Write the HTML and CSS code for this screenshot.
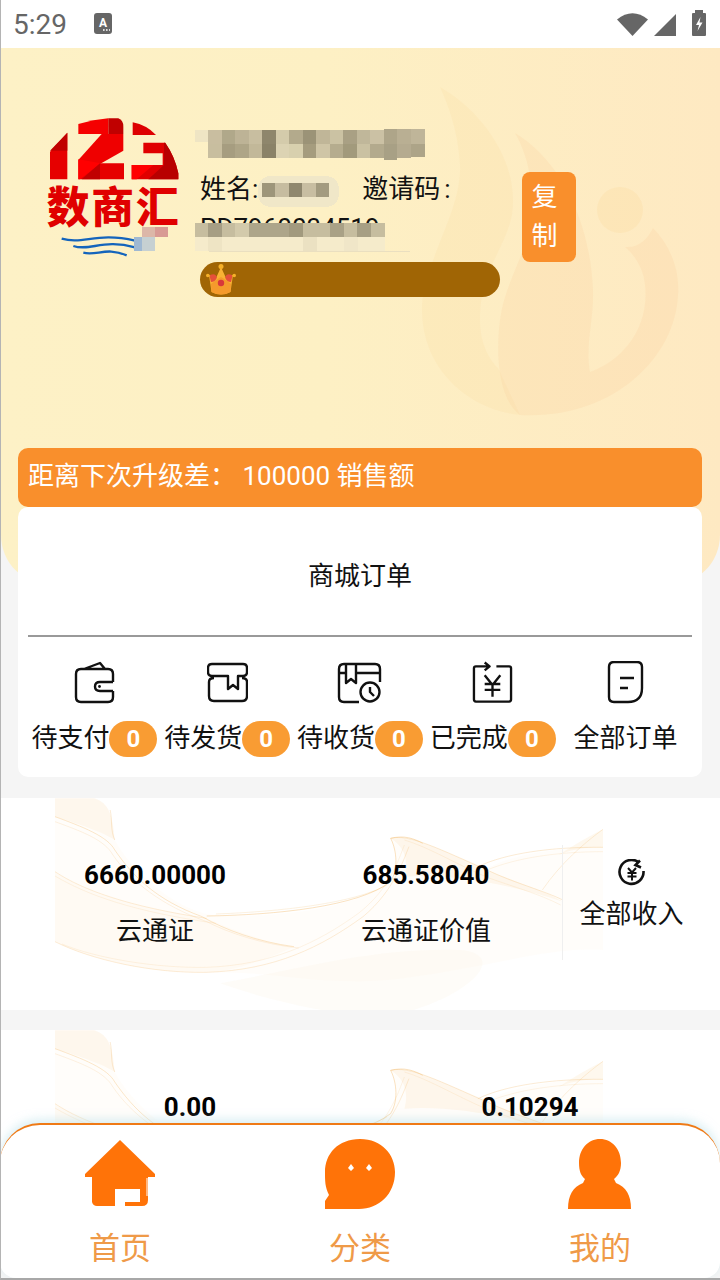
FILE: index.html
```html
<!DOCTYPE html>
<html lang="zh">
<head>
<meta charset="utf-8">
<title>数商汇</title>
<link rel="stylesheet" href="styles.css">
</head>
<body>
<svg class="defs" width="0" height="0">
  <symbol id="wave" viewBox="120 24 1192 636" preserveAspectRatio="none">
    <path fill="#fbe3bd" opacity=".08" d="M120 25H205C240 40 245 80 250 150C280 230 380 370 480 378C640 380 780 350 850 270C870 230 860 170 850 145C890 130 960 180 1060 235C1120 190 1220 172 1312 170V480C1200 470 1100 520 900 560C720 600 600 540 450 547C330 550 200 510 120 455Z"/>
    <path fill="#fbdcae" opacity=".2" d="M850 145C890 130 960 180 1060 240C1120 275 1180 300 1225 335C1100 280 980 250 880 260C890 210 880 170 850 145Z"/>
    <path fill="#fbe3bd" opacity=".1" d="M120 245C180 300 280 350 450 385C520 430 590 460 640 470C560 520 500 545 450 547C330 550 200 510 120 455Z"/>
    <path fill="#fbdcae" opacity=".16" d="M120 25H205C240 40 245 80 250 150C230 130 170 100 120 80Z"/>
    <path fill="#fdf3e2" opacity=".25" d="M480 580C640 540 820 470 1000 480C1100 490 1040 600 900 660H700C620 640 540 610 480 580Z"/>
    <path fill="#fbe3bd" opacity=".25" d="M1312 118V172C1270 172 1240 180 1215 195C1250 165 1280 140 1312 118Z"/>
    <g fill="none" stroke="#f2b868" stroke-width="1.3">
      <path opacity=".65" d="M120 80C180 110 235 140 250 180C290 260 340 330 440 380C490 420 560 455 640 470"/>
      <path opacity=".35" d="M120 95C180 125 228 150 246 195C286 275 350 345 450 395C500 430 570 462 650 474"/>
      <path opacity=".5" d="M120 245C180 300 280 350 450 385"/>
      <path opacity=".3" d="M120 258C190 315 290 365 470 400"/>
      <path opacity=".5" d="M120 455C200 510 330 550 450 547C600 540 700 470 790 380C860 300 880 200 890 170"/>
      <path opacity=".3" d="M135 462C210 505 340 535 450 532C590 525 690 460 780 370C850 295 868 205 880 165"/>
      <path opacity=".8" d="M450 378C600 375 780 350 850 275C870 230 860 170 850 145C880 135 900 145 920 160"/>
      <path opacity=".4" d="M470 372C610 365 770 340 842 285"/>
      <path opacity=".55" d="M850 145C890 130 960 180 1060 240C1120 280 1180 300 1225 330"/>
      <path opacity=".3" d="M880 150C930 170 990 220 1060 262C1120 292 1170 310 1220 345"/>
      <path opacity=".55" d="M1040 230C1100 190 1200 170 1312 172"/>
      <path opacity=".3" d="M1060 240C1120 205 1210 185 1312 185"/>
      <path opacity=".45" d="M1312 118C1270 160 1220 220 1180 300"/>
      <path opacity=".55" d="M240 60C245 90 240 120 250 150"/>
    </g>
  </symbol>
</svg>

<div class="phone">
  <header class="status">
    <span class="time">5:29</span>
    <svg class="icon-a" viewBox="0 0 18 21"><rect width="18" height="21" rx="3" fill="#666"/><text x="9" y="13.5" class="icon-a-text">A</text><path d="M9 17h1.6M12 17h1.6M15 17h1" stroke="#fff" stroke-width="1.4"/></svg>
    <span class="spacer"></span>
    <svg class="icon-wifi" viewBox="0 0 31 24"><path fill="#666" d="M0 7.5Q15.5-5 31 7.5L15.5 24Z"/></svg>
    <svg class="icon-signal" viewBox="0 0 22 22"><path fill="#666" d="M0 22L22 0V22Z"/></svg>
    <svg class="icon-battery" viewBox="0 0 14 26"><path fill="#666" d="M3 0H11V3H13Q14 3 14 4V25Q14 26 13 26H1Q0 26 0 25V4Q0 3 1 3H3Z"/><path fill="#fff" d="M8.5 7L4 15H7L5.5 21L10.5 12.5H7.5Z"/></svg>
  </header>

  <main class="main">
    <div class="hero-bg">
      <svg class="flame" viewBox="400 48 320 537">
        <path fill="#fbd99a" opacity=".18" d="M440 87C480 110 520 160 512 215C505 250 480 270 480 320C480 345 490 360 498 368L520 415C470 410 420 370 422 305C425 260 462 210 460 165C458 130 448 105 440 87Z"/>
        <path fill="#fbcf9a" opacity=".22" d="M515 133C560 160 590 220 593 290C594 320 585 345 590 372C620 362 650 330 645 285C644 270 635 255 625 247C640 248 648 238 653 228C670 245 680 270 678 295C675 360 610 420 520 415C500 400 495 360 500 320C505 280 530 250 532 210C533 175 525 150 515 133Z"/>
        <circle cx="620" cy="210" r="23" fill="#fbd490" opacity=".22"/>
      </svg>
    </div>

    <section class="profile">
      <svg class="logo" viewBox="0 0 450 465">
        <path fill="#e60000" d="M30 125L82 68V208H30Z"/>
        <path fill="#c00000" d="M30 122L82 68V122Z"/>
        <path fill="#f50000" d="M115 42Q160 28 205 25V72H115Z"/>
        <path fill="#c00000" d="M205 25H235Q250 30 250 50V72H205Z"/>
        <path fill="#ef0000" d="M185 72H250V122L180 162L115 150Z"/>
        <path fill="#e60000" d="M115 150L180 160H252V208H115Z"/>
        <path fill="#ff0000" d="M115 148L182 160L120 208H115Z"/>
        <path fill="#c00000" d="M125 208L180 160V208Z"/>
        <path fill="#dd0000" d="M278 37Q320 45 348 75H278Z"/>
        <path fill="#e00000" d="M310 98H375Q405 140 415 190V208H275V165H368V130H310Z"/>
        <path fill="#ff0000" d="M275 165H340L290 208H275Z"/>
        <path fill="#b80000" d="M325 208L372 165V98H376Q405 140 415 190V208Z"/>
        <text class="logo-text" x="20" y="338" textLength="396">数商汇</text>
        <g fill="none" stroke="#1464bc" stroke-width="7">
          <path d="M65 386C130 405 170 365 285 392"/>
          <path d="M100 408C150 425 190 385 285 412"/>
          <path d="M130 428C170 438 200 410 260 436"/>
        </g>
        <g shape-rendering="crispEdges">
          <rect x="305" y="350" width="40" height="30" fill="#dcb7a8"/>
          <rect x="345" y="350" width="40" height="30" fill="#d89a94"/>
          <rect x="283" y="380" width="22" height="42" fill="#9fb8d2"/>
          <rect x="305" y="380" width="40" height="42" fill="#c6d0d2"/>
        </g>
      </svg>

      <div class="info">
        <svg class="mosaic-title" viewBox="0 0 230 31" shape-rendering="crispEdges">
          <rect x="0" y="1" width="14" height="12" fill="#efe5c4"/>
          <rect x="13" y="1" width="14" height="14" fill="#c9bea0"/><rect x="27" y="1" width="13" height="14" fill="#b0a88a"/><rect x="40" y="1" width="14" height="14" fill="#bdb396"/><rect x="54" y="1" width="13" height="14" fill="#c8bea0"/><rect x="67" y="1" width="14" height="14" fill="#8e866c"/><rect x="81" y="1" width="13" height="14" fill="#d4cbab"/><rect x="94" y="1" width="14" height="14" fill="#b3aa8c"/><rect x="108" y="1" width="13" height="14" fill="#9b9377"/><rect x="121" y="1" width="14" height="14" fill="#c0b698"/><rect x="135" y="1" width="13" height="14" fill="#cbc2a3"/><rect x="148" y="1" width="14" height="14" fill="#a9a084"/><rect x="162" y="1" width="13" height="14" fill="#c0b79a"/><rect x="175" y="1" width="14" height="14" fill="#cbc1a4"/><rect x="189" y="0" width="13" height="15" fill="#aea589"/><rect x="202" y="0" width="14" height="15" fill="#b9af93"/><rect x="216" y="0" width="14" height="15" fill="#bfb599"/>
          <rect x="13" y="15" width="14" height="14" fill="#c8be9f"/><rect x="27" y="15" width="13" height="14" fill="#a69d80"/><rect x="40" y="15" width="14" height="14" fill="#aea587"/><rect x="54" y="15" width="13" height="14" fill="#c2b899"/><rect x="67" y="15" width="14" height="14" fill="#8a8268"/><rect x="81" y="15" width="13" height="14" fill="#dcd3b3"/><rect x="94" y="15" width="14" height="14" fill="#d8d0ae"/><rect x="108" y="15" width="13" height="14" fill="#a59c7e"/><rect x="121" y="15" width="14" height="14" fill="#cfc5a6"/><rect x="135" y="15" width="13" height="14" fill="#b5ac8e"/><rect x="148" y="15" width="14" height="14" fill="#a29a7c"/><rect x="162" y="15" width="13" height="14" fill="#cac1a2"/><rect x="175" y="15" width="14" height="14" fill="#b3aa8d"/><rect x="189" y="15" width="13" height="16" fill="#a8a085"/><rect x="202" y="15" width="14" height="14" fill="#b5ab90"/><rect x="216" y="15" width="14" height="13" fill="#ada488"/>
        </svg>
        <p class="details">姓名:<svg class="mosaic-name" viewBox="0 0 84 35" shape-rendering="crispEdges"><rect x="1" y="2" width="81" height="31" rx="13" fill="#f0e7c8"/><rect x="5" y="9" width="13" height="14" fill="#9d957a"/><rect x="18" y="9" width="14" height="14" fill="#c6bca0"/><rect x="32" y="9" width="13" height="14" fill="#8f876e"/><rect x="45" y="9" width="14" height="14" fill="#c8bea2"/><rect x="59" y="9" width="13" height="14" fill="#a39b80"/></svg><span class="invite">邀请码<span class="colon">:</span></span><br>PD7960034519
          <svg class="mosaic-code" viewBox="0 0 215 30" shape-rendering="crispEdges">
            <rect x="0" y="0" width="190" height="14" fill="#c6bd9f"/>
            <rect x="13" y="0" width="14" height="14" fill="#a69e84"/><rect x="40" y="0" width="14" height="14" fill="#d3caab"/><rect x="54" y="0" width="40" height="14" fill="#ada58a"/><rect x="94" y="0" width="14" height="14" fill="#a29a7e"/><rect x="135" y="0" width="14" height="14" fill="#a9a186"/><rect x="162" y="0" width="14" height="14" fill="#a79f84"/>
            <rect x="0" y="14" width="190" height="14" fill="#f5ebcb"/>
            <rect x="13" y="14" width="14" height="14" fill="#eee4c4"/><rect x="108" y="14" width="14" height="14" fill="#ebe1c2"/><rect x="149" y="14" width="14" height="14" fill="#f0e6c8"/>
            <rect x="14" y="28" width="201" height="1" fill="#eadfc0"/>
          </svg>
        </p>
        <div class="level">
          <svg class="crown" viewBox="0 0 30 32">
            <path fill="#f9b233" d="M15 3L19.5 13L27 11L24.5 28Q15 33 5.500 28L3 11L10.500 13Z"/>
            <path fill="#f59a2c" d="M5 20L10 16L15 13L20 16L25 20L24.500 28Q15 33 5.500 28Z"/>
            <path fill="#e5503a" d="M3.500 11.500Q9 8 11 13.500Q9 18 5 18Z"/>
            <path fill="#e5503a" d="M26.500 11.500Q21 8 19 13.500Q21 18 25 18Z"/>
            <circle cx="15" cy="2.500" r="2.500" fill="#f6b129"/><circle cx="1.800" cy="11.500" r="1.800" fill="#f6b129"/><circle cx="28.200" cy="11.500" r="1.800" fill="#f6b129"/>
            <circle cx="15" cy="19" r="3.200" fill="#d8383a"/>
          </svg>
        </div>
      </div>
      <button class="copy">复<br>制</button>
    </section>

    <div class="upgrade">距离下次升级差： 100000 销售额</div>

    <section class="orders">
      <h2 class="orders-title">商城订单</h2>
      <div class="orders-grid">
        <div class="order">
          <svg class="order-icon" viewBox="74 661 41 44"><path d="M113 682V674Q113 669 108 669H81Q76 669 76 674V697Q76 702 81 702H108Q113 702 113 697V691M84 669L100 663L105 669M113 682H100Q95 682 95 686.500Q95 691 100 691H113"/><circle class="dot" cx="99.500" cy="686.500" r="1.400"/></svg>
          <div class="order-label"><span>待支付</span><b class="badge">0</b></div>
        </div>
        <div class="order">
          <svg class="order-icon" viewBox="207 661 41 44"><path d="M220 676H212Q208 676 208 672V668Q208 664 212 664H243Q247 664 247 668V672Q247 676 243 676H238V689L233 685L228 689V676H220"/><path d="M214 678Q209 678 209 682V696Q209 701 214 701H242Q247 701 247 696V682Q247 678 242 678"/></svg>
          <div class="order-label"><span>待发货</span><b class="badge">0</b></div>
        </div>
        <div class="order">
          <svg class="order-icon wide" viewBox="338 661 46 44"><path d="M360 702H345Q340 702 340 697V669Q340 664 345 664H376Q381 664 381 669V682M340 673H347M357 673H381M347 664V683L352 679L357 683V664"/><circle cx="371" cy="692" r="9.500"/><path d="M371 687V692L375 696"/></svg>
          <div class="order-label"><span>待收货</span><b class="badge">0</b></div>
        </div>
        <div class="order">
          <svg class="order-icon" viewBox="472 661 42 44"><path d="M490 666H476Q474 666 474 668V700Q474 702 476 702H510Q512 702 512 700V668Q512 666 510 666H497M485 662L490 666L485 670M485 675L493 685L501 675M485 684H501M485 690H501M493 684V697"/></svg>
          <div class="order-label"><span>已完成</span><b class="badge">0</b></div>
        </div>
        <div class="order">
          <svg class="order-icon" viewBox="606 661 39 44"><path d="M614 662H637Q642 662 642 667V688Q642 702 628 702H614Q609 702 609 697V667Q609 662 614 662ZM620 678H634M620 688H628"/></svg>
          <div class="order-label"><span>全部订单</span></div>
        </div>
      </div>
    </section>

    <section class="income">
      <svg class="wave"><use href="#wave"/></svg>
      <div class="stat"><strong>6660.00000</strong><span>云通证</span></div>
      <div class="stat"><strong>685.58040</strong><span>云通证价值</span></div>
      <div class="all-income">
        <svg class="income-icon" viewBox="0 0 28 28"><path d="M21 3.500A12 12 0 1 0 25.500 12M22 1.500L17.500 6L23 8.500"/><path d="M10 9L14 13.500L18 9M9.500 14H18.500M9.500 17.500H18.500M14 13.500V21.500" class="thin"/></svg>
        <span>全部收入</span>
      </div>
    </section>

    <section class="income second">
      <svg class="wave"><use href="#wave"/></svg>
      <div class="stat"><strong>0.00</strong></div>
      <div class="stat"><strong>0.10294</strong></div>
    </section>

    <nav class="tabbar">
      <a class="tab">
        <svg class="tab-icon" viewBox="0 0 72 68"><path d="M36 0L71 34V37H64V60Q64 66 58 66H41V62H56V49H31V66H13Q9 66 8 62V37H1V34Z"/><path class="tab-cut" d="M63 38V56"/></svg>
        <span>首页</span>
      </a>
      <a class="tab">
        <svg class="tab-icon" viewBox="0 0 72 70"><path d="M36 0C58 0 71 16 71 33C71 55 55 70 35 70H1V62L5 56C1 48 1 42 1 33C1 15 14 0 36 0Z"/><path class="tab-eye" d="M27 25L30 29L27 32L24 29ZM45 25L48 29L45 32L42 29Z"/></svg>
        <span>分类</span>
      </a>
      <a class="tab">
        <svg class="tab-icon" viewBox="0 0 72 70"><path d="M36 0C48 0 57 10 57 24C57 32 54 37 50 40L52 44C62 48 67 56 67 70H4C4 56 9 48 19 44L21 40C17 37 15 32 15 24C15 10 24 0 36 0Z"/></svg>
        <span>我的</span>
      </a>
    </nav>
  </main>
</div>
</body>
</html>
```

FILE: styles.css
```css
* { box-sizing: border-box; }
html, body { margin: 0; padding: 0; }
body {
  width: 720px;
  height: 1280px;
  overflow: hidden;
  background: #f5f5f5;
  font-family: Roboto, "Noto Sans CJK SC", sans-serif;
  font-size: 26px;
  color: #111;
}
.defs { position: absolute; }
.phone {
  width: 720px;
  height: 1280px;
  border-left: 1px solid #b4b4b4;
  border-bottom: 2px solid #a8a8a8;
  position: relative;
  overflow: hidden;
}

/* status bar */
.status {
  height: 48px;
  background: #fff;
  display: flex;
  align-items: center;
  padding: 0 14px 0 12px;
}
.time { color: #666; font-size: 28px; width: 81px; }
.icon-a { width: 18px; height: 21px; margin-top: -1px; }
.icon-a-text { font: 700 12px Roboto, sans-serif; fill: #fff; text-anchor: middle; }
.spacer { flex: 1; }
.icon-wifi { width: 31px; height: 24px; }
.icon-signal { width: 22px; height: 22px; margin-left: 6px; margin-top: 1px; }
.icon-battery { width: 14px; height: 26px; margin-left: 16px; margin-top: -2px; }

/* hero */
.main { position: relative; }
.hero-bg {
  position: absolute;
  left: 0;
  top: 0;
  width: 719px;
  height: 537px;
  border-radius: 0 0 50px 50px;
  background: linear-gradient(90deg, #fdf1c6 0%, #fdf0c4 45%, #fee9c2 100%);
  overflow: hidden;
}
.flame { position: absolute; left: 399px; top: 0; width: 320px; height: 537px; }
.profile {
  position: relative;
  display: flex;
  align-items: flex-start;
  padding: 62px 0 0 39px;
}
.logo { width: 150px; height: 155px; flex: none; }
.logo-text {
  font: 900 128px "Noto Sans CJK SC", sans-serif;
  fill: #e00000;
}
.info { width: 300px; margin-left: 10px; }
.mosaic-title { display: block; width: 230px; height: 31px; margin: 19px 0 0 -5px; }
.details {
  position: relative;
  margin: 10px 0 0;
  height: 78px;
  line-height: 39px;
  white-space: nowrap;
}
.mosaic-name { width: 84px; height: 35px; vertical-align: middle; margin-left: -1px; }
.invite { margin-left: 21px; }
.colon { margin-left: 4px; }
.mosaic-code { position: absolute; left: -5px; top: 53px; width: 215px; height: 30px; }
.level {
  position: relative;
  height: 35px;
  margin-top: 14px;
  border-radius: 18px;
  background: #a06505;
}
.crown { position: absolute; left: 6px; top: 2px; width: 30px; height: 32px; }
.copy {
  width: 54px;
  height: 90px;
  margin: 62px 0 0 22px;
  padding: 0 9px 0 0;
  border: 0;
  border-radius: 8px;
  background: #f98f2c;
  color: #fff;
  font: 26px/39px Roboto, "Noto Sans CJK SC", sans-serif;
}

/* upgrade bar */
.upgrade {
  position: relative;
  height: 59px;
  margin: 151px 18px 0 17px;
  padding-left: 10px;
  line-height: 56px;
  border-radius: 10px;
  background: #f98f2c;
  color: #fff;
}

/* orders */
.orders {
  position: relative;
  height: 270px;
  margin: 0 18px 0 17px;
  padding: 0 10px;
  background: #fff;
  border-radius: 10px;
}
.orders-title {
  margin: 0;
  height: 130px;
  border-bottom: 2px solid #999;
  font-size: 26px;
  font-weight: 400;
  text-align: center;
  line-height: 138px;
}
.orders-grid { display: grid; grid-template-columns: repeat(5, 1fr); padding-top: 24px; }
.order { display: flex; flex-direction: column; align-items: center; }
.order-icon {
  width: 41px;
  height: 44px;
  fill: none;
  stroke: #111;
  stroke-width: 2.4;
  stroke-linejoin: round;
}
.order-icon.wide { width: 46px; }
.order-icon .dot { fill: #111; stroke: none; }
.order-label { display: flex; align-items: center; height: 36px; margin-top: 16px; white-space: nowrap; }
.order-label span { margin-top: -7px; }
.badge {
  width: 48px;
  height: 36px;
  border-radius: 18px;
  background: #f99c33;
  color: #fff;
  font-size: 24px;
  font-weight: 700;
  line-height: 36px;
  text-align: center;
}

/* income */
.income {
  position: relative;
  height: 212px;
  margin-top: 21px;
  padding: 0 18px 0 19px;
  background: #fff;
  display: grid;
  grid-template-columns: 270px 272px 1fr;
}
.income.second { margin-top: 20px; grid-template-columns: 1fr 1fr; padding-right: 20px; }
.wave { position: absolute; left: 54px; top: 0; width: 548px; height: 212px; }
.stat {
  position: relative;
  display: flex;
  flex-direction: column;
  align-items: center;
  padding-top: 60px;
}
.stat strong { font-size: 26px; line-height: 34px; font-weight: 700; color: #000; }
.stat span { margin-top: 22px; line-height: 34px; }
.all-income {
  position: relative;
  height: 115px;
  margin-top: 47px;
  padding-right: 2px;
  border-left: 1px solid #efefef;
  display: flex;
  flex-direction: column;
  align-items: center;
}
.income-icon {
  width: 28px;
  height: 28px;
  margin-top: 14px;
  fill: none;
  stroke: #111;
  stroke-width: 2.6;
}
.income-icon .thin { stroke-width: 2; }
.all-income span { margin-top: 10px; line-height: 34px; }

/* tab bar */
.tabbar {
  position: absolute;
  left: -1px;
  top: 1075px;
  width: 720px;
  height: 155px;
  display: grid;
  grid-template-columns: repeat(3, 1fr);
  background: #fff;
  border-top: 2px solid #ef7a16;
  border-radius: 40px 40px 16px 16px;
  box-shadow: 0 -4px 10px rgba(190, 225, 235, .55);
}
.tab {
  display: flex;
  flex-direction: column;
  align-items: center;
  color: #ef9a48;
  font-size: 31px;
}
.tab-icon { width: 72px; height: 70px; margin-top: 14px; fill: #ff7308; flex: none; }
.tab-cut { fill: none; stroke: #fff; stroke-width: 1; }
.tab-eye { fill: #fff; }
.tab span { margin-top: 18px; line-height: 44px; }
```
